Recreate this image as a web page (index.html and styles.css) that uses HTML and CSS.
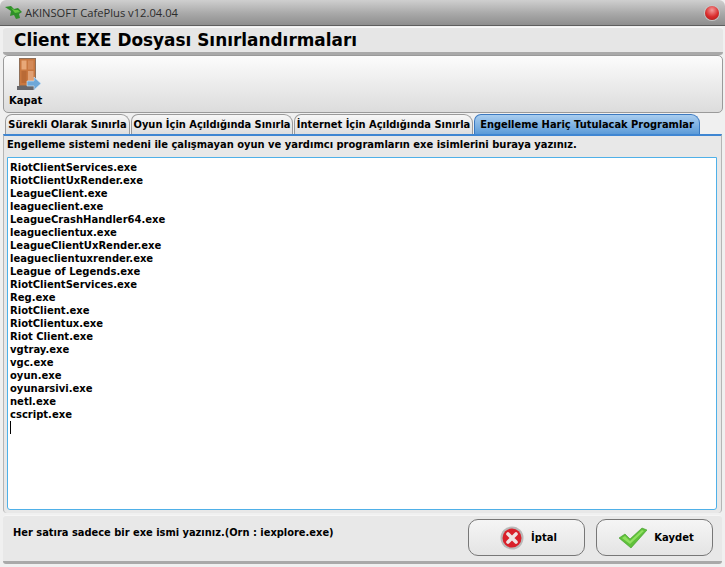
FILE: index.html
```html
<!DOCTYPE html>
<html lang="tr">
<head>
<meta charset="utf-8">
<title>AKINSOFT CafePlus</title>
<link rel="stylesheet" href="styles.css">
</head>
<body>
<div class="window">
  <header class="titlebar">
    <svg class="frog" width="20" height="16" viewBox="0 0 20 16"><path d="M0 2 L6 1 L9 4 L13 3 L17 7 L14 9 L15 13 L11 14 L9 10 L5 11 L6 6 Z" fill="#2f8f2a"/><path d="M6 3 L10 5 L13 5 L15 7 L10 8 Z" fill="#63c53f"/></svg>
    <span class="apptitle">AKINSOFT CafePlus v12.04.04</span>
    <span class="close"></span>
  </header>
  <div class="heading"><h1>Client EXE Dosyası Sınırlandırmaları</h1></div>
  <div class="toolbar">
    <button class="toolbtn">
      <svg class="doorIcon" width="25" height="33" viewBox="0 0 25 33">
        <rect x="2.500" y=".5" width="16" height="27" fill="#c9773f" stroke="#8f6f58"/>
        <rect x="4.500" y="2.500" width="5" height="9" fill="#e8a878"/><rect x="11" y="2.500" width="5.500" height="9" fill="#d48a58"/>
        <rect x="4.500" y="13" width="5" height="12" fill="#b96a36"/><rect x="11" y="13" width="5.500" height="12" fill="#e0a074"/>
        <rect x="0" y="28" width="18" height="4" fill="#67676b"/>
        <path d="M10 23 H17 V19 L24 25.500 L17 32 V28 H10 Z" fill="#6fa8d8" stroke="#dcebf8" stroke-width=".6"/>
      </svg>
      <span>Kapat</span>
    </button>
  </div>
  <nav class="tabs">
    <span class="tab t1">Sürekli Olarak Sınırla</span>
    <span class="tab t2">Oyun İçin Açıldığında Sınırla</span>
    <span class="tab t3">İnternet İçin Açıldığında Sınırla</span>
    <span class="tab active">Engelleme Hariç Tutulacak Programlar</span>
  </nav>
  <main class="panel">
    <p class="hint">Engelleme sistemi nedeni ile çalışmayan oyun ve yardımcı programların exe isimlerini buraya yazınız.</p>
    <div class="editor">
      <div>RiotClientServices.exe</div>
      <div>RiotClientUxRender.exe</div>
      <div>LeagueClient.exe</div>
      <div>leagueclient.exe</div>
      <div>LeagueCrashHandler64.exe</div>
      <div>leagueclientux.exe</div>
      <div>LeagueClientUxRender.exe</div>
      <div>leagueclientuxrender.exe</div>
      <div>League of Legends.exe</div>
      <div>RiotClientServices.exe</div>
      <div>Reg.exe</div>
      <div>RiotClient.exe</div>
      <div>RiotClientux.exe</div>
      <div>Riot Client.exe</div>
      <div>vgtray.exe</div>
      <div>vgc.exe</div>
      <div>oyun.exe</div>
      <div>oyunarsivi.exe</div>
      <div>netl.exe</div>
      <div>cscript.exe</div>
      <div class="caret"></div>
    </div>
  </main>
  <footer class="footer">
    <p class="note">Her satıra sadece bir exe ismi yazınız.(Orn : iexplore.exe)</p>
    <div class="actions">
      <button class="btn">
        <svg width="24" height="24" viewBox="0 0 24 24"><circle cx="12" cy="12" r="11.500" fill="#b9b9b9"/><circle cx="12" cy="12" r="9.500" fill="#d9202a"/><path d="M8 8 L16 16 M16 8 L8 16" stroke="#efe3e3" stroke-width="3.600" stroke-linecap="round"/></svg>
        <span>İptal</span>
      </button>
      <button class="btn">
        <svg width="28" height="22" viewBox="0 0 28 22"><path d="M0 11 L6 7 L11 12 L23 1 L28 3 L12 21 Z" fill="#5fc03a" stroke="#3f9a28" stroke-width=".6"/><path d="M3 11 L6 9 L11 14 L23 3 L25 4 L11 17 Z" fill="#8fe060"/></svg>
        <span>Kaydet</span>
      </button>
    </div>
  </footer>
</div>
</body>
</html>
```
FILE: styles.css
```css
* { box-sizing: border-box; }
html, body { margin: 0; height: 100%; }
body { width: 725px; height: 567px; overflow: hidden; background: #f0f0f0; font-family: "DejaVu Sans", Verdana, sans-serif; color: #000; }
.window { width: 725px; height: 567px; display: flex; flex-direction: column; }

.titlebar { height: 26px; flex: none; display: flex; align-items: center; padding: 0 6px 0 5px; background: linear-gradient(#cfcfcf, #a8a8a8 55%, #8e8e8e); border-bottom: 1px solid #5e5e5e; border-radius: 6px 6px 0 0; }
.frog { flex: none; }
.apptitle { font: 11.200px "Open Sans", sans-serif; color: #2c2c2c; flex: 1; }
.close { width: 14px; height: 14px; border-radius: 50%; background: radial-gradient(circle at 50% 30%, #f59a9a, #d92b2b 55%, #a81a1a); box-shadow: 0 0 0 1px #c6c6c6; }

.heading { height: 28px; flex: none; margin: 1px 2px 0 3px; background: #e6e6e6; border-radius: 3px; border-top: 1px solid #f7f7f7; border-bottom: 3px solid #a9a9a9; padding-left: 11px; display: flex; align-items: center; }
h1 { margin: 0; font: bold 16.900px/1 "DejaVu Sans", sans-serif; }

.toolbar { height: 58px; flex: none; margin: 0 2px 0 3px; border: 1px solid #9a9a9a; border-radius: 5px; background: linear-gradient(#fcfcfc, #dcdcdc); display: flex; }
.toolbtn { border: 0; background: none; padding: 2px 0 0 5px; width: 40px; display: flex; flex-direction: column; align-items: flex-start; font: bold 10px "DejaVu Sans", sans-serif; }
.doorIcon { margin: 0 0 4px 8px; }

.tabs { height: 21px; flex: none; display: flex; align-items: flex-end; padding-left: 5px; gap: 1px; }
.tab { height: 20px; display: flex; align-items: center; justify-content: center; font: bold 9.900px "DejaVu Sans", sans-serif; border: 1px solid #9a9a9a; border-bottom: 0; border-radius: 7px 9px 0 0; background: linear-gradient(#f7f7f7, #dedede); flex: none; white-space: nowrap; }
.t1 { width: 125px; }
.t2 { width: 162px; }
.t3 { width: 179px; }
.tab.active { width: 226px; background: linear-gradient(#a9cdef, #5c9bd8); border-color: #3a78c0; }

.panel { height: 379px; flex: none; margin: 0 3px; background: #e8e8e8; border-top: 2px solid #3f86d2; border-left: 1px solid #b5b5b5; border-right: 1px solid #b5b5b5; border-radius: 0 0 4px 4px; padding: 1px 4px 3px 3px; display: flex; flex-direction: column; }
.hint { margin: 0; height: 19px; font: bold 9.950px/15px "DejaVu Sans", sans-serif; white-space: nowrap; }
.editor { flex: 1; margin-top: 1px; background: #fff; border: 1px solid #4fb0e8; border-radius: 0 0 3px 3px; padding: 3px 0 0 2px; font: bold 10px/13px "DejaVu Sans", sans-serif; }
.caret { width: 1px; height: 13px; background: #000; }

.footer { height: 49px; flex: none; margin: 2px 3px 0; background: #e8e8e8; border-top: 1px solid #f5f5f5; border-bottom: 3px solid #a9a9a9; border-radius: 3px; display: flex; justify-content: space-between; padding: 0 9px 0 10px; }
.note { margin: 9px 0 0; font: bold 9.900px/15px "DejaVu Sans", sans-serif; }
.actions { display: flex; gap: 11px; padding-top: 3px; }
.btn { width: 117px; height: 37px; border: 1px solid #777; border-radius: 10px; background: linear-gradient(#f5f5f5, #e4e4e4); display: flex; align-items: center; justify-content: center; gap: 7px; font: bold 10px "DejaVu Sans", sans-serif; padding: 0 0 0 4px; color: #000; }
```
